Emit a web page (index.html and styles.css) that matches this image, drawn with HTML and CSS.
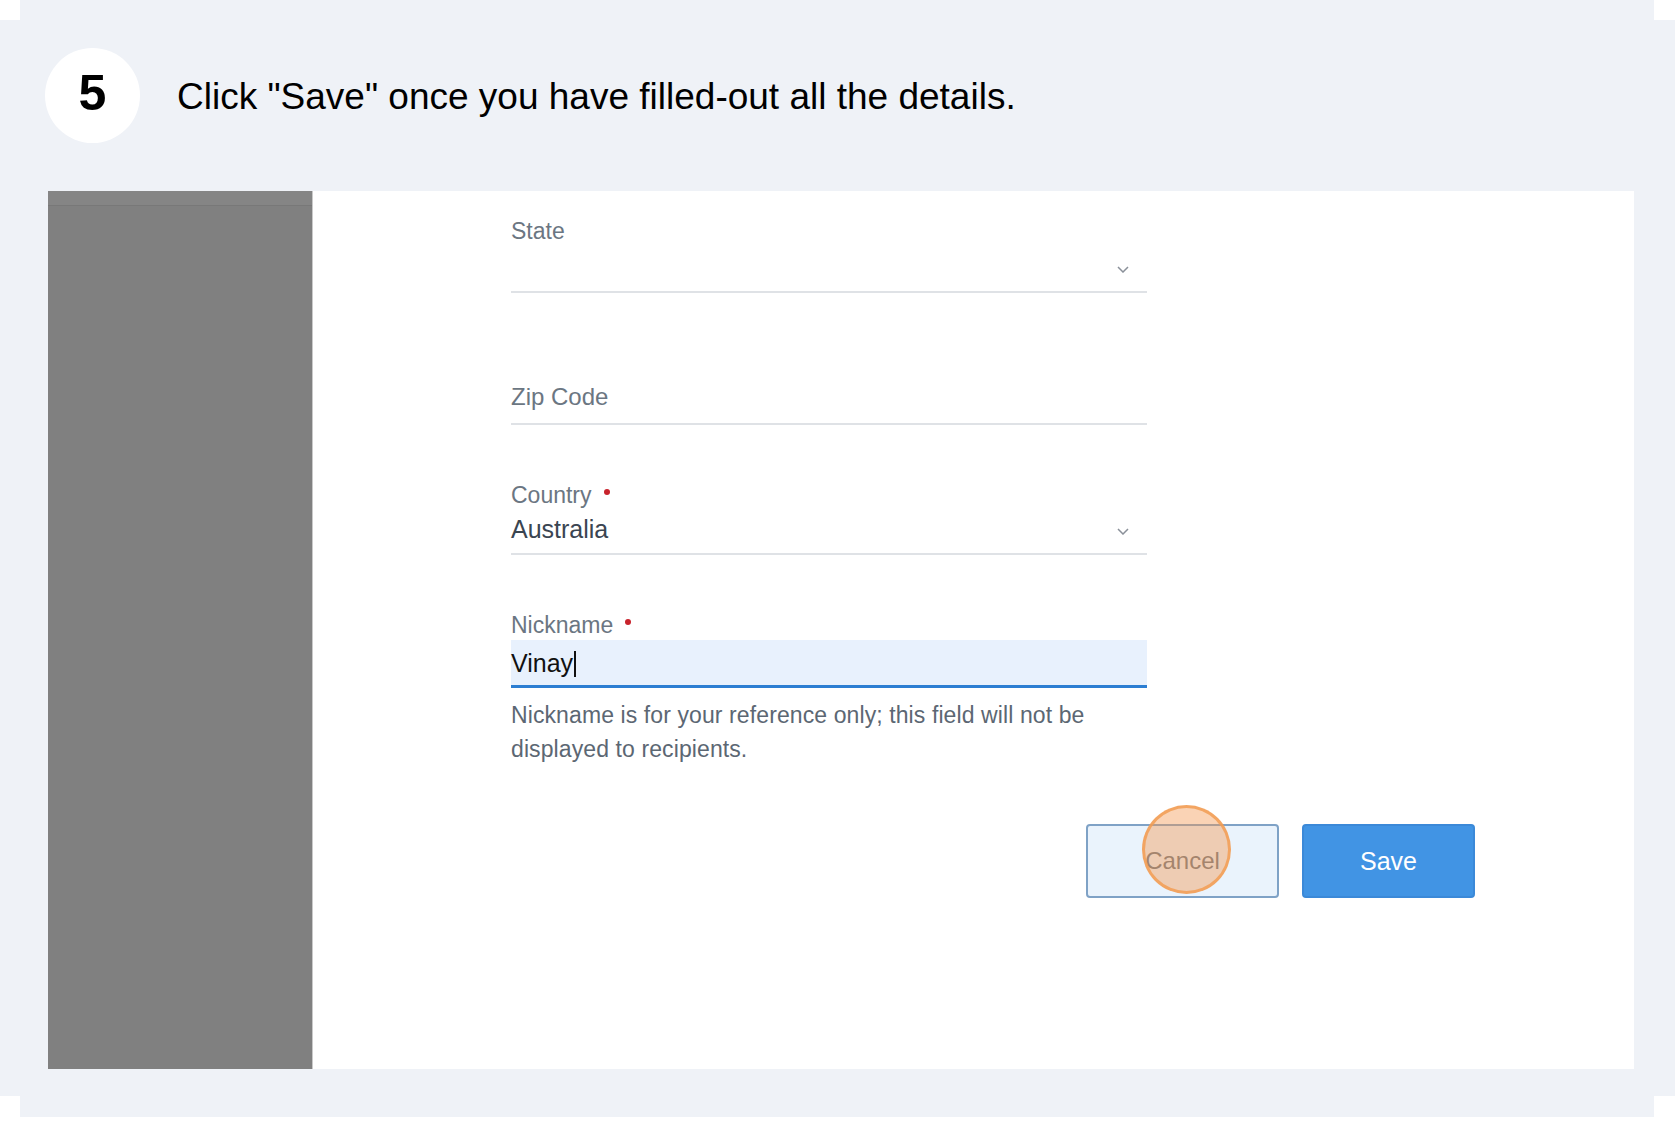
FILE: index.html
```html
<!DOCTYPE html>
<html lang="en">
<head>
<meta charset="utf-8">
<title>Step 5</title>
<link rel="stylesheet" href="styles.css">
</head>
<body>
<div class="page">
  <header class="step">
    <div class="step-num">5</div>
    <p class="step-text">Click "Save" once you have filled-out all the details.</p>
  </header>
  <div class="shot">
    <aside class="side">
      <div class="side-top"></div>
    </aside>
    <main class="card">
      <div class="form">
        <div class="field field-state">
          <div class="label">State</div>
          <div class="select-row state-row">
            <span class="value"></span>
            <svg class="chev" width="12" height="7" viewBox="0 0 12 7"><polyline points="1,1 6,6 11,1" fill="none" stroke="#8a9099" stroke-width="1.5"/></svg>
          </div>
        </div>
        <div class="field field-zip">
          <div class="select-row zip-row">
            <span class="placeholder">Zip Code</span>
          </div>
        </div>
        <div class="field field-country">
          <div class="label">Country<span class="req"></span></div>
          <div class="select-row country-row">
            <span class="value">Australia</span>
            <svg class="chev" width="12" height="7" viewBox="0 0 12 7"><polyline points="1,1 6,6 11,1" fill="none" stroke="#8a9099" stroke-width="1.5"/></svg>
          </div>
        </div>
        <div class="field field-nick">
          <div class="label">Nickname<span class="req"></span></div>
          <div class="input-active"><span class="typed">Vinay</span><span class="caret"></span></div>
          <p class="help">Nickname is for your reference only; this field will not be displayed to recipients.</p>
        </div>
      </div>
      <div class="actions">
        <button class="btn btn-cancel">Cancel<span class="click-ring"></span></button>
        <button class="btn btn-save">Save</button>
      </div>
    </main>
  </div>
</div>
</body>
</html>
```

FILE: styles.css
```css
html, body {
  margin: 0;
  padding: 0;
  background: #ffffff;
}

.page {
  width: 1675px;
  height: 1117px;
  background: #eff2f7;
  clip-path: polygon(20px 0, 1654px 0, 1654px 20px, 1675px 20px, 1675px 1096px, 1654px 1096px, 1654px 1117px, 20px 1117px, 20px 1096px, 0 1096px, 0 20px, 20px 20px);
  font-family: "Liberation Sans", Arial, sans-serif;
  overflow: hidden;
}

.step {
  display: flex;
  align-items: center;
  padding: 48px 0 0 45px;
  height: 95px;
}

.step-num {
  width: 95px;
  height: 95px;
  border-radius: 50%;
  background: #ffffff;
  display: flex;
  align-items: center;
  justify-content: center;
  font-size: 50px;
  font-weight: bold;
  color: #000;
  line-height: 1;
  padding-bottom: 6px;
  box-sizing: border-box;
}

.step-text {
  margin: 4px 0 0 37px;
  font-size: 37px;
  color: #000;
  line-height: 1.15;
}

.shot {
  display: flex;
  margin: 48px 0 0 48px;
  width: 1586px;
  height: 878px;
}

.side {
  width: 264px;
  background: #808080;
  border-right: 1px solid #c9c9c9;
  display: flex;
  flex-direction: column;
}

.side-top {
  height: 14px;
  background: #858585;
  border-bottom: 1px solid #787878;
}

.card {
  flex: 1;
  background: #ffffff;
  padding: 27px 0 0 198px;
  box-sizing: border-box;
}

.form {
  width: 636px;
}

.label {
  font-size: 23px;
  line-height: 26px;
  color: #6b7682;
  display: flex;
  align-items: center;
}

.req {
  width: 6px;
  height: 6px;
  border-radius: 50%;
  background: #c8232c;
  margin: 0 0 6px 12px;
}

.select-row {
  display: flex;
  align-items: center;
  justify-content: space-between;
  border-bottom: 2px solid #dfe2e6;
  padding-right: 18px;
}

.state-row {
  padding-top: 4px;
  box-sizing: border-box;
  height: 49px;
}

.field-zip {
  margin-top: 89px;
}

.zip-row {
  height: 41px;
  align-items: flex-start;
}

.placeholder {
  font-size: 24px;
  line-height: 30px;
  color: #6b7682;
}

.field-country {
  margin-top: 57px;
}

.country-row {
  margin-top: 6px;
  height: 39px;
  align-items: flex-start;
}

.country-row .value {
  font-size: 25px;
  line-height: 30px;
  color: #3a4551;
}

.country-row .chev {
  margin-top: 14px;
}

.field-nick {
  margin-top: 57px;
}

.input-active {
  margin-top: 2px;
  height: 45px;
  background: #e8f1fd;
  border-bottom: 3px solid #2c7ed2;
  display: flex;
  align-items: center;
}

.typed {
  font-size: 25px;
  line-height: 45px;
  color: #111;
  padding-top: 2px;
}

.caret {
  width: 2px;
  height: 26px;
  background: #111;
  margin: 2px 0 0 1px;
}

.help {
  margin: 10px 0 0;
  font-size: 23px;
  line-height: 34px;
  letter-spacing: 0.1px;
  color: #5c6773;
}

.actions {
  display: flex;
  justify-content: flex-end;
  gap: 23px;
  width: 964px;
  margin-top: 58px;
}

.btn {
  height: 74px;
  font-family: "Liberation Sans", Arial, sans-serif;
  font-size: 24px;
  border-radius: 4px;
  box-sizing: border-box;
  cursor: pointer;
  padding: 0;
}

.btn-cancel {
  position: relative;
  width: 193px;
  background: #eaf3fc;
  border: 2px solid #7fa2c6;
  color: #6c7884;
}

.btn-save {
  width: 173px;
  background: #4194e4;
  border: 2px solid #3b89d8;
  color: #ffffff;
  font-size: 25px;
}

.click-ring {
  position: absolute;
  left: 54px;
  top: -21px;
  width: 89px;
  height: 89px;
  box-sizing: border-box;
  border-radius: 50%;
  background: rgba(242, 150, 78, 0.42);
  border: 3px solid rgba(242, 158, 84, 0.85);
}
```
